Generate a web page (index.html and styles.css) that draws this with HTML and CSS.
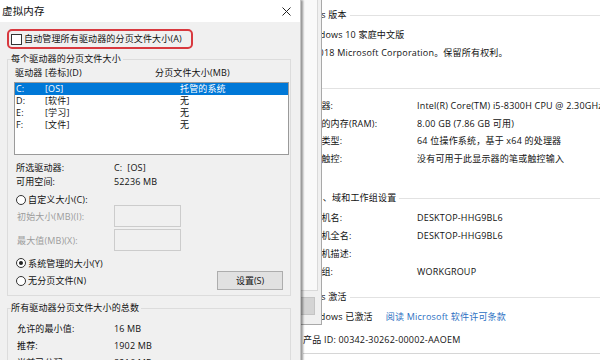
FILE: index.html
```html
<!DOCTYPE html>
<html lang="zh-CN">

<head>
    <meta charset="UTF-8">
    <meta name="viewport" content="width=device-width, initial-scale=1.0">
    <title>虚拟内存</title>
    <link rel="stylesheet" href="styles.css">
</head>

<body>
    <div class="desktop">
        <!-- System control panel page, behind everything -->
        <section class="sys-window">
            <div class="sec-head first"><span>Windows 版本</span></div>
            <div class="sec-body edition">
                <div class="line">Windows 10 家庭中文版</div>
                <div class="line">© 2018 Microsoft Corporation。保留所有权利。</div>
            </div>

            <div class="sec-head system"><span>系统</span></div>
            <div class="sec-body rows-tight">
                <div class="kv"><span class="k">处理器:</span><span class="v">Intel(R) Core(TM) i5-8300H CPU @ 2.30GHz</span></div>
                <div class="kv"><span class="k">安装的内存(RAM):</span><span class="v">8.00 GB (7.86 GB 可用)</span></div>
                <div class="kv"><span class="k">系统类型:</span><span class="v">64 位操作系统，基于 x64 的处理器</span></div>
                <div class="kv"><span class="k">笔和触控:</span><span class="v">没有可用于此显示器的笔或触控输入</span></div>
            </div>

            <div class="sec-head computer"><span>计算机名、域和工作组设置</span></div>
            <div class="sec-body rows">
                <div class="kv"><span class="k">计算机名:</span><span class="v">DESKTOP-HHG9BL6</span></div>
                <div class="kv"><span class="k">计算机全名:</span><span class="v">DESKTOP-HHG9BL6</span></div>
                <div class="kv"><span class="k">计算机描述:</span><span class="v"></span></div>
                <div class="kv"><span class="k">工作组:</span><span class="v">WORKGROUP</span></div>
            </div>

            <div class="sec-head activation"><span>Windows 激活</span></div>
            <div class="sec-body activation-body">
                <div class="line">Windows 已激活<a class="link">阅读 Microsoft 软件许可条款</a></div>
                <div class="line product">产品 ID: 00342-30262-00002-AAOEM</div>
            </div>
        </section>

        <!-- System properties dialog, partly hidden -->
        <section class="props-window">
            <div class="tab-page"></div>
            <div class="props-footer">
                <button class="win-btn props-btn">应用(A)</button>
            </div>
        </section>

        <!-- Virtual memory dialog -->
        <section class="vm-dialog">
            <div class="titlebar">
                <span class="title">虚拟内存</span>
                <svg class="close" width="9" height="9" viewBox="0 0 9 9">
                    <path d="M0.5 0.5 L8.5 8.5 M8.5 0.5 L0.5 8.5" stroke="#222" stroke-width="1" fill="none" />
                </svg>
            </div>

            <div class="vm-body">
                <div class="highlight">
                    <label class="check-row"><span class="checkbox"></span>自动管理所有驱动器的分页文件大小(A)</label>
                </div>

                <fieldset class="group per-drive">
                    <legend>每个驱动器的分页文件大小</legend>
                    <div class="col-head">
                        <span class="col-drive">驱动器 [卷标](D)</span>
                        <span>分页文件大小(MB)</span>
                    </div>
                    <div class="drive-list">
                        <div class="drive selected"><span class="d-letter">C:</span><span class="d-label">[OS]</span><span>托管的系统</span></div>
                        <div class="drive"><span class="d-letter">D:</span><span class="d-label">[软件]</span><span>无</span></div>
                        <div class="drive"><span class="d-letter">E:</span><span class="d-label">[学习]</span><span>无</span></div>
                        <div class="drive"><span class="d-letter">F:</span><span class="d-label">[文件]</span><span>无</span></div>
                    </div>

                    <div class="info">
                        <div class="info-row"><span class="info-k">所选驱动器:</span><span>C:&nbsp; [OS]</span></div>
                        <div class="info-row"><span class="info-k">可用空间:</span><span>52236 MB</span></div>
                    </div>

                    <div class="radio-row custom"><span class="radio"></span>自定义大小(C):</div>
                    <div class="size-row"><span class="size-k">初始大小(MB)(I):</span><span class="size-box"></span></div>
                    <div class="size-row"><span class="size-k">最大值(MB)(X):</span><span class="size-box"></span></div>

                    <div class="radio-row managed"><span class="radio on"></span>系统管理的大小(Y)</div>
                    <div class="radio-row none">
                        <span class="radio-label"><span class="radio"></span>无分页文件(N)</span>
                        <button class="win-btn set-btn">设置(S)</button>
                    </div>
                </fieldset>

                <fieldset class="group totals">
                    <legend>所有驱动器分页文件大小的总数</legend>
                    <div class="total-row"><span class="total-k">允许的最小值:</span><span>16 MB</span></div>
                    <div class="total-row"><span class="total-k">推荐:</span><span>1902 MB</span></div>
                    <div class="total-row"><span class="total-k">当前已分配:</span><span>8216 MB</span></div>
                </fieldset>
            </div>
        </section>
    </div>
</body>

</html>
```

FILE: styles.css
```css
:root {
    --ui-font: "Open Sans", "Noto Sans CJK SC", sans-serif;
    --text: #111111;
    --dialog-bg: #f0f0f0;
    --group-line: #dcdcdc;
    --select: #0078d7;
    --alert: #d8393f;
    --link: #2a6fc2;
}

body {
    margin: 0;
    font-family: var(--ui-font);
    color: var(--text);
    background: #ffffff;
}

.desktop {
    position: relative;
    width: 600px;
    height: 360px;
    overflow: hidden;
}

/* ---------- system page ---------- */

.sys-window {
    position: absolute;
    left: 270px;
    top: 0;
    right: 0;
    bottom: 0;
    background: #ffffff;
    font-size: 9px;
    letter-spacing: 0.2px;
    padding-top: 6px;
    white-space: nowrap;
}

.sec-head {
    display: flex;
    align-items: center;
    height: 18px;
    line-height: 18px;
    padding-left: 16px;
}

.sec-head::after {
    content: "";
    flex: 1;
    height: 1px;
    background: #e2e2e2;
    margin-left: 3px;
}

.sec-head.system { margin-top: 17px; }
.sec-head.computer { margin-top: 22px; }
.sec-head.activation { margin-top: 7px; }

.sec-body {
    padding-left: 33px;
}

.sec-body .line {
    height: 18px;
    line-height: 18px;
}

.edition { margin-top: 2px; }

.kv {
    display: flex;
    height: 18px;
    line-height: 18px;
}

.rows-tight .kv {
    height: 17.5px;
    line-height: 17.5px;
}

.rows { margin-top: 2px; }

.k {
    width: 114px;
    flex-shrink: 0;
}

.activation-body { margin-top: 2px; }

.link {
    color: var(--link);
    margin-left: 13px;
}

.sec-body .product {
    margin-top: 5px;
    padding-bottom: 4px;
    border-bottom: 1px solid #d6d6d6;
}

/* ---------- system properties (behind) ---------- */

.props-window {
    position: absolute;
    left: 0;
    top: 0;
    width: 321px;
    height: 324px;
    background: var(--dialog-bg);
    border-right: 1px solid #a9a9a9;
    border-bottom: 1px solid #a9a9a9;
}

.tab-page {
    height: 290px;
    margin-right: 3px;
    background: #f9f9f9;
    border-right: 1px solid #d9d9d9;
    border-bottom: 1px solid #d9d9d9;
}

.props-footer {
    display: flex;
    justify-content: flex-end;
    padding: 6px 6px 0 0;
}

.win-btn {
    font-family: var(--ui-font);
    font-size: 9px;
    color: var(--text);
    background: #e1e1e1;
    border: 1px solid #adadad;
    padding: 0;
    margin: 0;
}

.props-btn {
    width: 70px;
    height: 18px;
    background: #d4d4d4;
    border-color: #c4c4c4;
}

/* ---------- virtual memory dialog ---------- */

.vm-dialog {
    position: absolute;
    left: 0;
    top: 0;
    width: 300px;
    height: 380px;
    background: var(--dialog-bg);
    border-right: 1px solid #c4c4c4;
    box-shadow: 2px 0 2px rgba(0, 0, 0, 0.4);
    font-size: 9px;
    letter-spacing: 0.15px;
    white-space: nowrap;
}

.titlebar {
    display: flex;
    justify-content: space-between;
    align-items: center;
    height: 22px;
    background: #ffffff;
    padding: 0 9px 0 2px;
}

.title {
    font-size: 10.5px;
    line-height: 22px;
}

.close {
    margin-top: 1px;
}

.vm-body {
    padding: 7px 9px 0 7px;
}

.highlight {
    width: 180px;
    height: 16px;
    border: 2px solid var(--alert);
    border-radius: 5px;
    display: flex;
    align-items: center;
    padding-left: 2px;
}

.check-row {
    display: flex;
    align-items: center;
    line-height: 12px;
}

.checkbox {
    width: 9px;
    height: 9px;
    border: 1px solid #333333;
    background: #ffffff;
    margin-right: 2px;
}

.group {
    margin: 4px 0 0;
    padding: 2px 1px 5px 6px;
    border: 1px solid var(--group-line);
    border-radius: 0;
    min-width: 0;
}

.group legend {
    padding: 0 2px 0 0;
    margin-left: -3px;
    line-height: 12px;
}

.col-head {
    display: flex;
    height: 12px;
    line-height: 12px;
    padding-left: 1px;
}

.col-drive {
    width: 140px;
}

.drive-list {
    margin-top: 3px;
    height: 71px;
    background: #ffffff;
    border: 1px solid #9a9a9a;
}

.drive {
    display: flex;
    height: 12px;
    line-height: 12px;
    padding-left: 1px;
}

.drive.selected {
    background: var(--select);
    color: #ffffff;
}

.d-letter { width: 29px; }
.d-label { width: 135px; }

.info {
    margin-top: 6px;
    padding-left: 2px;
}

.info-row {
    display: flex;
    height: 14px;
    line-height: 14px;
}

.info-k {
    width: 98px;
}

.radio-row {
    display: flex;
    align-items: center;
    padding-left: 2px;
}

.radio {
    width: 8px;
    height: 8px;
    border: 1px solid #333333;
    border-radius: 50%;
    background: #ffffff;
    margin-right: 2px;
    display: flex;
    align-items: center;
    justify-content: center;
}

.radio.on::after {
    content: "";
    width: 4px;
    height: 4px;
    border-radius: 50%;
    background: #222222;
}

.radio-row.custom {
    margin-top: 5px;
    height: 11px;
}

.size-row {
    display: flex;
    align-items: center;
    height: 22px;
    padding-left: 3px;
    color: #9c9c9c;
}

.size-row + .size-row {
    margin-top: 2px;
}

.size-k {
    width: 97px;
}

.size-box {
    width: 65px;
    height: 20px;
    border: 1px solid #cccccc;
    background: #f0f0f0;
}

.radio-row.managed {
    margin-top: 6px;
    height: 12px;
}

.radio-row.none {
    justify-content: space-between;
    margin-top: 2px;
    height: 19px;
}

.radio-label {
    display: flex;
    align-items: center;
}

.set-btn {
    width: 66px;
    height: 19px;
    margin-right: 6px;
}

.group.totals {
    margin-top: 6px;
    padding-top: 6px;
}

.total-row {
    display: flex;
    height: 17px;
    line-height: 17px;
    padding-left: 3px;
}

.total-k {
    width: 97px;
}
```
